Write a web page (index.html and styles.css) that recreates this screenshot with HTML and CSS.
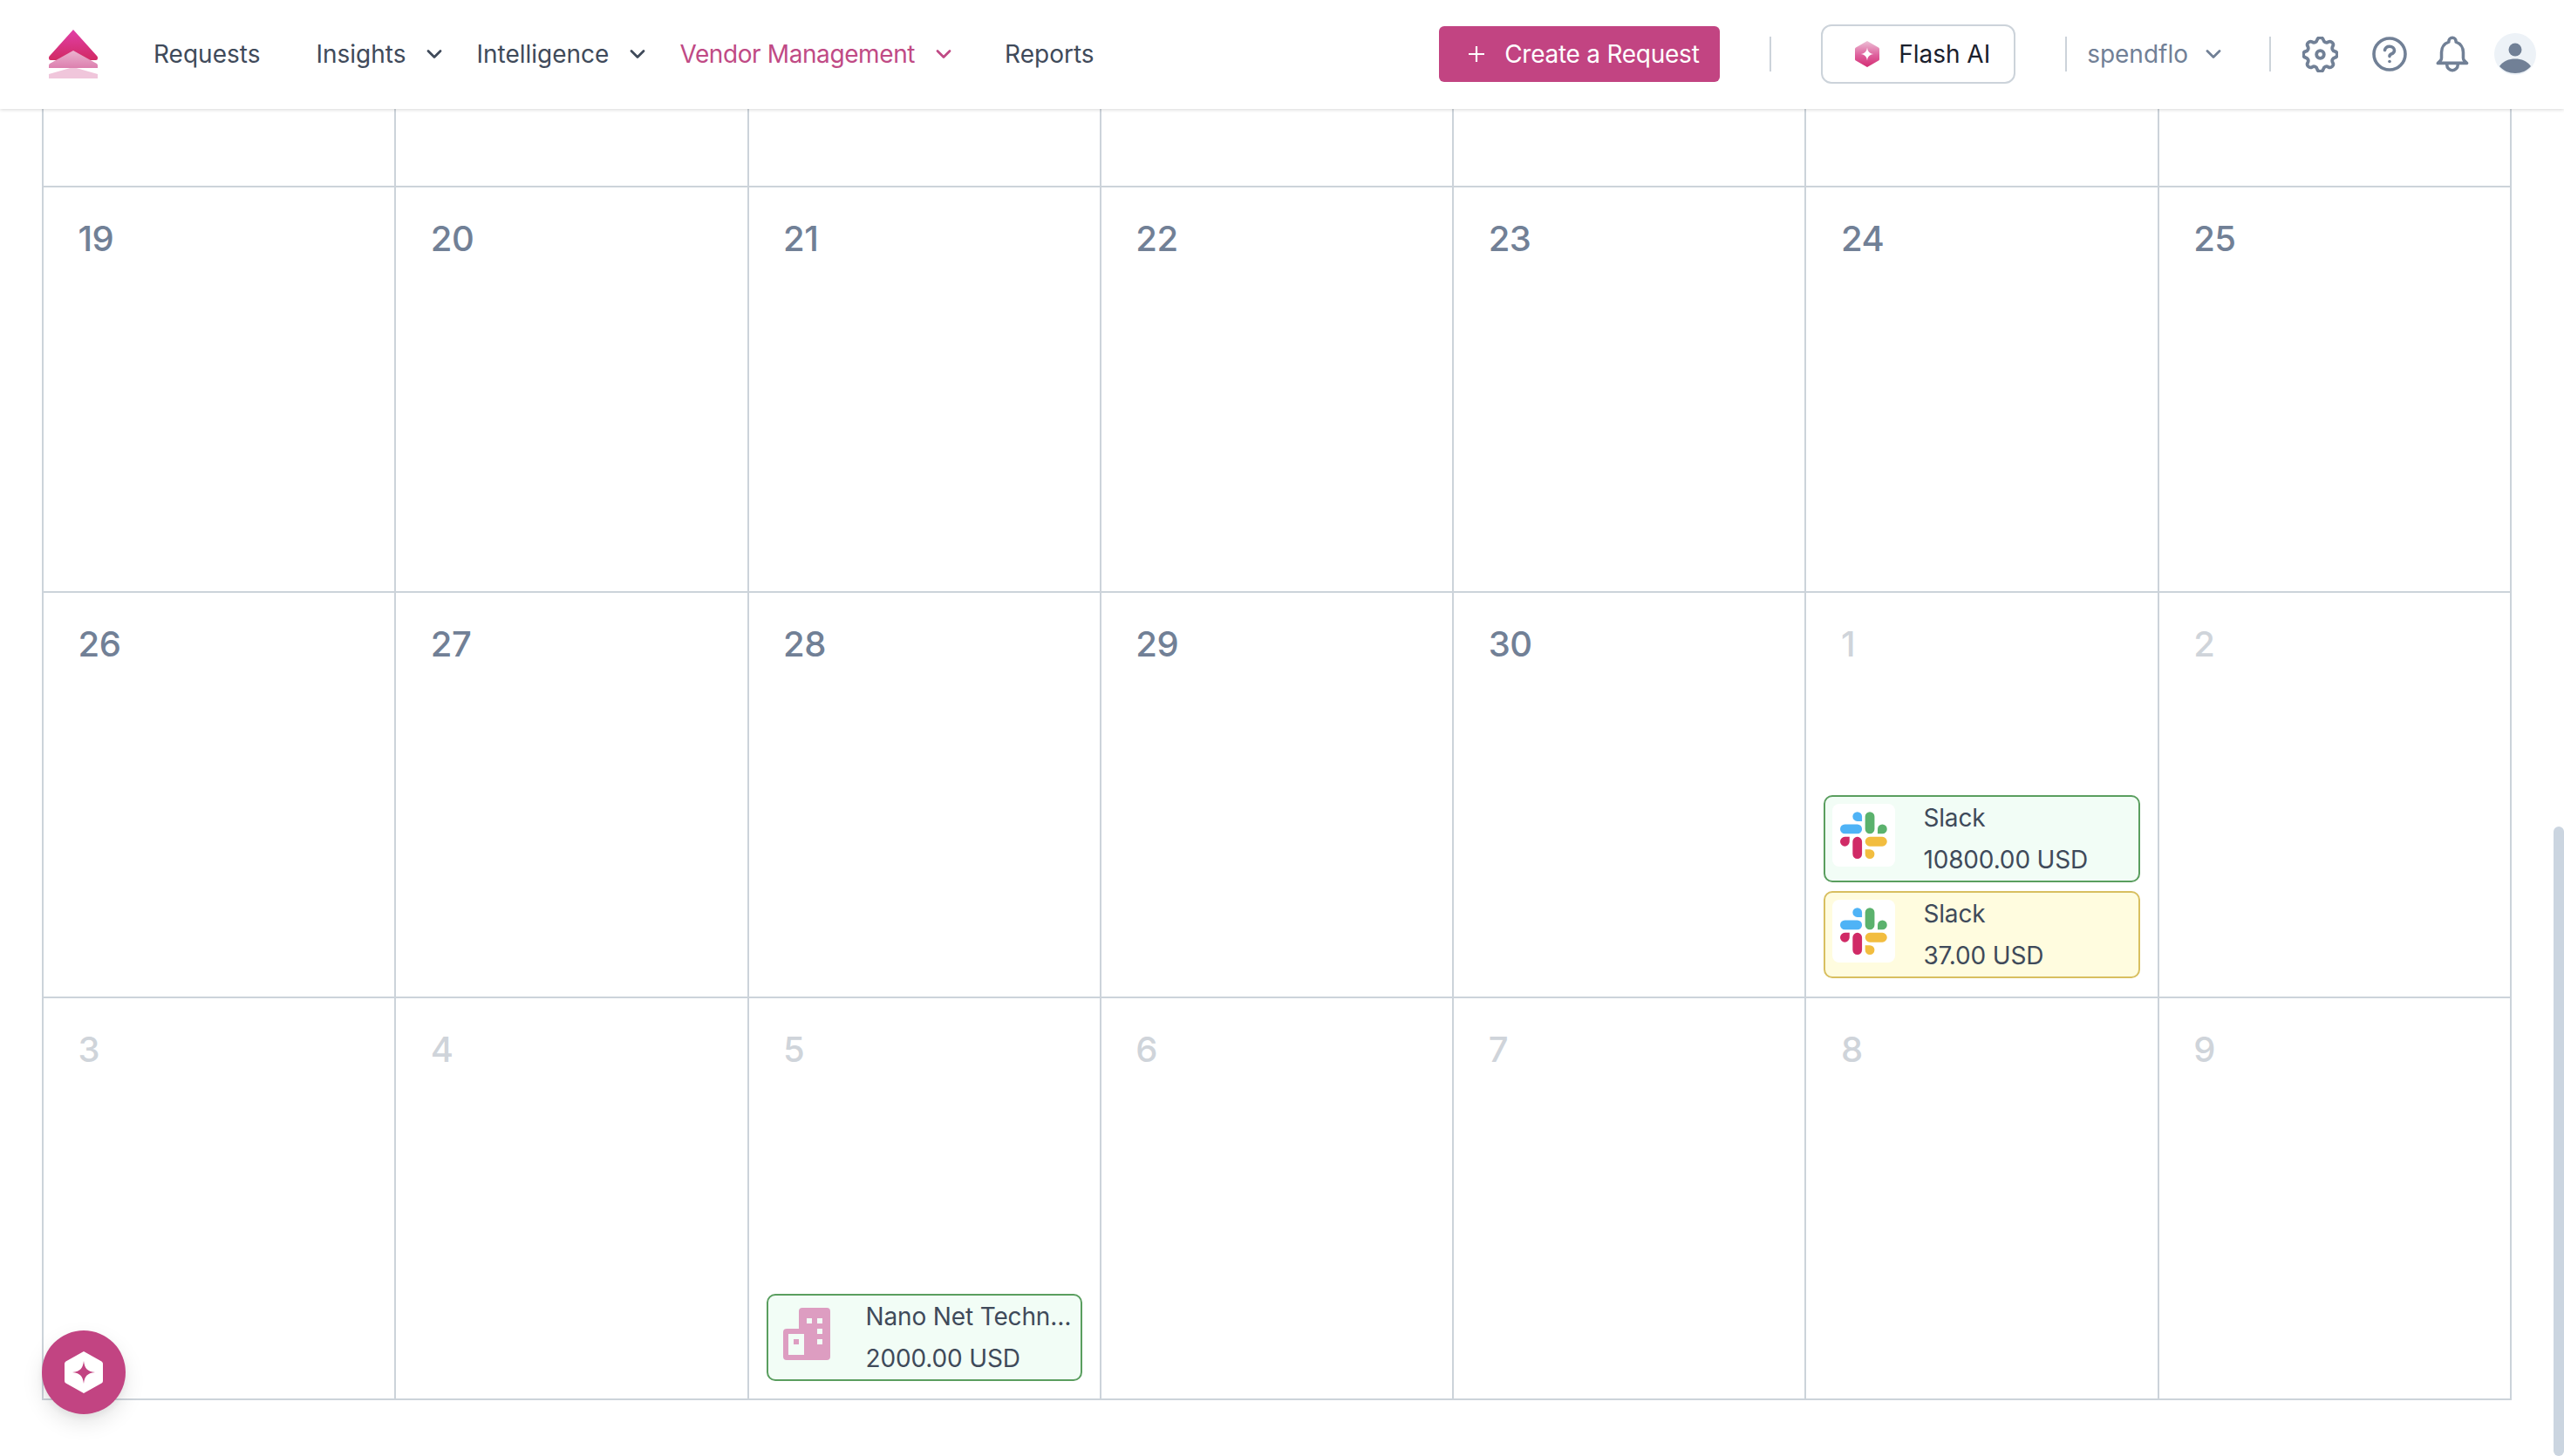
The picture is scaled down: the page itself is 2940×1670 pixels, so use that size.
FILE: index.html
```html
<!DOCTYPE html>
<html>
<head>
  <meta charset="utf-8">
  <title>Vendor Management</title>
  <link rel="stylesheet" href="styles.css">
</head>
<body>
  <!-- shared icons -->
  <svg class="defs" width="0" height="0">
    <defs>
      <linearGradient id="logoTop" x1="0" y1="0" x2="0" y2="1">
        <stop offset="0" stop-color="#e13fa8"/>
        <stop offset="1" stop-color="#d12a63"/>
      </linearGradient>
      <linearGradient id="logoMid" x1="0" y1="0" x2="0" y2="1">
        <stop offset="0" stop-color="#ebb4d0"/>
        <stop offset="1" stop-color="#dc7fae"/>
      </linearGradient>
      <linearGradient id="flashHex" x1="0" y1="0" x2="0" y2="1">
        <stop offset="0" stop-color="#ecc0d6"/>
        <stop offset="0.55" stop-color="#de5f9c"/>
        <stop offset="1" stop-color="#d42d73"/>
      </linearGradient>
      <symbol id="chevron" viewBox="0 0 18 12">
        <path d="M2 2.500l7 7 7-7" fill="none" stroke="currentColor" stroke-width="2.800" stroke-linecap="round" stroke-linejoin="round"/>
      </symbol>
      <symbol id="slack" viewBox="0 0 54 54">
        <path fill="#4fb3f6" d="M19.712.133a5.381 5.381 0 0 0-5.376 5.387 5.381 5.381 0 0 0 5.376 5.386h5.376V5.520A5.381 5.381 0 0 0 19.712.133m0 14.365H5.376A5.381 5.381 0 0 0 0 19.884a5.381 5.381 0 0 0 5.376 5.387h14.336a5.381 5.381 0 0 0 5.376-5.387 5.381 5.381 0 0 0-5.376-5.386"/>
        <path fill="#5bb26d" d="M53.760 19.884a5.381 5.381 0 0 0-5.376-5.386 5.381 5.381 0 0 0-5.376 5.386v5.387h5.376a5.381 5.381 0 0 0 5.376-5.387m-14.336 0V5.520A5.381 5.381 0 0 0 34.048.133a5.381 5.381 0 0 0-5.376 5.387v14.364a5.381 5.381 0 0 0 5.376 5.387 5.381 5.381 0 0 0 5.376-5.387"/>
        <path fill="#f2bd3f" d="M34.048 54a5.381 5.381 0 0 0 5.376-5.387 5.381 5.381 0 0 0-5.376-5.386h-5.376v5.386A5.381 5.381 0 0 0 34.048 54m0-14.365h14.336a5.381 5.381 0 0 0 5.376-5.386 5.381 5.381 0 0 0-5.376-5.387H34.048a5.381 5.381 0 0 0-5.376 5.387 5.381 5.381 0 0 0 5.376 5.386"/>
        <path fill="#d02a66" d="M0 34.249a5.381 5.381 0 0 0 5.376 5.386 5.381 5.381 0 0 0 5.376-5.386v-5.387H5.376A5.381 5.381 0 0 0 0 34.250m14.336-.001v14.364A5.381 5.381 0 0 0 19.712 54a5.381 5.381 0 0 0 5.376-5.387V34.250a5.381 5.381 0 0 0-5.376-5.387 5.381 5.381 0 0 0-5.376 5.387"/>
      </symbol>
    </defs>
  </svg>

  <header class="topbar">
    <svg class="logo" width="56" height="56" viewBox="0 0 56 56">
      <path fill="#f0c6db" d="M28 43L56 51V56H0V51Z"/>
      <path fill="url(#logoTop)" d="M28 0L55 30Q56 31 56 32V33Q56 35 54 35H2Q0 35 0 33V32Q0 31 1 30Z"/>
      <path fill="url(#logoMid)" d="M28 24L55 39Q56 40 56 41V44H0V41Q0 40 1 39Z"/>
    </svg>

    <nav class="nav">
      <a class="nav-item nav-wide">Requests</a>
      <a class="nav-item">Insights <svg class="chev" width="18" height="12"><use href="#chevron"/></svg></a>
      <a class="nav-item">Intelligence <svg class="chev" width="18" height="12"><use href="#chevron"/></svg></a>
      <a class="nav-item nav-active">Vendor Management <svg class="chev" width="18" height="12"><use href="#chevron"/></svg></a>
      <a class="nav-item">Reports</a>
    </nav>

    <div class="actions">
      <button class="btn-create">
        <svg width="20" height="20" viewBox="0 0 20 20"><path d="M10 1v18M1 10h18" stroke="#fff" stroke-width="2.200" fill="none"/></svg>
        Create a Request
      </button>
      <span class="divider"></span>
      <button class="btn-flash">
        <svg width="28" height="30" viewBox="0 0 28 30">
          <path fill="url(#flashHex)" d="M14 0L27 7.500Q28 8 28 9V21Q28 22 27 22.500L14 30L1 22.500Q0 22 0 21V9Q0 8 1 7.500Z"/>
          <path fill="#fff" d="M14 7.500C14.800 12.500 16.500 14.200 21.500 15C16.500 15.800 14.800 17.500 14 22.500C13.200 17.500 11.500 15.800 6.500 15C11.500 14.200 13.200 12.500 14 7.500Z"/>
        </svg>
        Flash AI
      </button>
      <span class="divider divider-org"></span>
      <div class="org">spendflo <svg class="chev" width="18" height="12"><use href="#chevron"/></svg></div>
      <span class="divider divider-icons"></span>
      <svg class="icon" width="41" height="41" viewBox="2.500 2.500 19 19" fill="none" stroke="#718096" stroke-width="1.750" stroke-linecap="round" stroke-linejoin="round">
        <path d="M10.325 4.317c.426-1.756 2.924-1.756 3.350 0a1.724 1.724 0 002.573 1.066c1.543-.94 3.310.826 2.370 2.370a1.724 1.724 0 001.065 2.572c1.756.426 1.756 2.924 0 3.350a1.724 1.724 0 00-1.066 2.573c.94 1.543-.826 3.310-2.370 2.370a1.724 1.724 0 00-2.572 1.065c-.426 1.756-2.924 1.756-3.350 0a1.724 1.724 0 00-2.573-1.066c-1.543.94-3.310-.826-2.370-2.370a1.724 1.724 0 00-1.065-2.572c-1.756-.426-1.756-2.924 0-3.350a1.724 1.724 0 001.066-2.573c-.94-1.543.826-3.310 2.370-2.370.996.608 2.296.07 2.572-1.065z"/>
        <circle cx="12" cy="12" r="2"/>
      </svg>
      <svg class="icon icon-help" width="40" height="40" viewBox="0 0 40 40" fill="none" stroke="#718096" stroke-width="3.600" stroke-linecap="round" stroke-linejoin="round">
        <circle cx="20" cy="20" r="18"/>
        <path d="M14.500 15.500c.6-2.600 2.800-4.200 5.500-4.200 3.100 0 5.500 1.900 5.500 4.400 0 2.200-1.700 3.600-3.600 4.300-1.300.5-1.900 1.300-1.900 2.600"/>
        <path d="M20 28.500h.02"/>
      </svg>
      <svg class="icon icon-bell" width="50" height="54" viewBox="0 0 24 26" fill="none" stroke="#718096" stroke-width="1.700" stroke-linecap="round" stroke-linejoin="round">
        <path d="M15 18h5l-1.405-1.405A2.032 2.032 0 0118 15.158V12a6.002 6.002 0 00-4-5.659V6a2 2 0 10-4 0v.341C7.670 7.165 6 9.388 6 12v3.159c0 .538-.214 1.055-.595 1.436L4 18h5m6 0v1a3 3 0 11-6 0v-1m6 0H9"/>
      </svg>
      <svg class="avatar" width="48" height="48" viewBox="0 0 48 48">
        <circle cx="24" cy="24" r="24" fill="#edf2f7"/>
        <circle cx="24" cy="19" r="7.500" fill="#718096"/>
        <path fill="#718096" d="M6 38C10 32 17 29.500 24 29.500S38 32 42 38C38 43 31 46 24 46S10 43 6 38Z"/>
      </svg>
    </div>
  </header>

  <main class="calendar">
    <div class="cell"></div>
    <div class="cell"></div>
    <div class="cell"></div>
    <div class="cell"></div>
    <div class="cell"></div>
    <div class="cell"></div>
    <div class="cell"></div>

    <div class="cell"><span class="day">19</span></div>
    <div class="cell"><span class="day">20</span></div>
    <div class="cell"><span class="day">21</span></div>
    <div class="cell"><span class="day">22</span></div>
    <div class="cell"><span class="day">23</span></div>
    <div class="cell"><span class="day">24</span></div>
    <div class="cell"><span class="day">25</span></div>

    <div class="cell"><span class="day">26</span></div>
    <div class="cell"><span class="day">27</span></div>
    <div class="cell"><span class="day">28</span></div>
    <div class="cell"><span class="day">29</span></div>
    <div class="cell"><span class="day">30</span></div>
    <div class="cell">
      <span class="day muted">1</span>
      <div class="events">
        <div class="event event-green">
          <span class="event-logo"><svg width="54" height="54"><use href="#slack"/></svg></span>
          <div class="event-text"><span>Slack</span><span>10800.00 USD</span></div>
        </div>
        <div class="event event-yellow">
          <span class="event-logo"><svg width="54" height="54"><use href="#slack"/></svg></span>
          <div class="event-text"><span>Slack</span><span>37.00 USD</span></div>
        </div>
      </div>
    </div>
    <div class="cell"><span class="day muted">2</span></div>

    <div class="cell"><span class="day muted">3</span></div>
    <div class="cell"><span class="day muted">4</span></div>
    <div class="cell">
      <span class="day muted">5</span>
      <div class="events">
        <div class="event event-green">
          <span class="event-logo event-logo-plain">
            <svg width="54" height="60" viewBox="0 0 54 60">
              <path fill="#dd9dc1" fill-rule="evenodd" d="M22 0H50Q54 0 54 4V56Q54 60 50 60H4Q0 60 0 56V28Q0 24 4 24H18V4Q18 0 22 0ZM6 30V54H24V30ZM12 36H18V42H12ZM27 12H33V18H27ZM39 12H45V18H39ZM39 24H45V30H39ZM39 36H45V42H39Z"/>
            </svg>
          </span>
          <div class="event-text"><span>Nano Net Techn…</span><span>2000.00 USD</span></div>
        </div>
      </div>
    </div>
    <div class="cell"><span class="day muted">6</span></div>
    <div class="cell"><span class="day muted">7</span></div>
    <div class="cell"><span class="day muted">8</span></div>
    <div class="cell"><span class="day muted">9</span></div>
  </main>

  <button class="fab">
    <svg width="44" height="48" viewBox="0 0 44 48">
      <path fill="#fff" fill-rule="evenodd" d="M22 0L42.500 11.500Q44 12.500 44 14V34Q44 35.500 42.500 36.500L22 48L1.500 36.500Q0 35.500 0 34V14Q0 12.500 1.500 11.500ZM22 11C23.200 19.500 25.500 22.800 35 24C25.500 25.200 23.200 28.500 22 37C20.800 28.500 18.500 25.200 9 24C18.500 22.800 20.800 19.500 22 11Z"/>
    </svg>
  </button>

  <div class="scroll-thumb"></div>
</body>
</html>
```

FILE: styles.css
```css
* {
  box-sizing: border-box;
}

html, body {
  height: 100%;
}

body {
  margin: 0;
  overflow: hidden;
  background: #fff;
  font-family: 'Inter', sans-serif;
  color: #3f4a5a;
}

.defs {
  position: absolute;
}

button {
  font-family: inherit;
  cursor: pointer;
}

/* top bar */
.topbar {
  position: relative;
  z-index: 2;
  display: flex;
  align-items: center;
  height: 125px;
  padding: 0 32px 1px 56px;
  background: #fff;
  box-shadow: 0 1px 4px rgba(0, 0, 0, 0.16);
}

.logo {
  flex-shrink: 0;
}

.nav {
  display: flex;
  align-items: center;
  margin-left: 64px;
  font-size: 28px;
}

.nav-item {
  display: flex;
  align-items: center;
  gap: 24px;
  margin-right: 39px;
  color: #3f4a5a;
}

.nav-wide {
  margin-right: 64px;
}

.nav-active {
  margin-right: 61px;
  color: #c04a85;
  letter-spacing: -0.4px;
}

.chev {
  flex-shrink: 0;
}

.actions {
  display: flex;
  align-items: center;
  margin-left: auto;
}

.btn-create {
  display: flex;
  align-items: center;
  gap: 22px;
  width: 322px;
  height: 64px;
  padding: 0 0 0 33px;
  border: none;
  border-radius: 6px;
  background: #c24482;
  color: #fff;
  font-size: 28px;
  letter-spacing: -0.25px;
}

.divider {
  width: 2px;
  height: 40px;
  margin: 0 57px;
  background: #ccd3da;
}

.divider-org {
  margin: 0 23px 0 57px;
}

.divider-icons {
  margin: 0 36px 0 55px;
}

.btn-flash {
  display: flex;
  align-items: center;
  gap: 22px;
  width: 223px;
  height: 68px;
  padding: 0 0 0 37px;
  border: 2px solid #ccd3da;
  border-radius: 12px;
  background: #fff;
  color: #1a202c;
  font-size: 28px;
}

.org {
  display: flex;
  align-items: center;
  gap: 20px;
  color: #718096;
  font-size: 28px;
}

.icon {
  flex-shrink: 0;
}

.icon-help {
  margin-left: 39px;
}

.icon-bell {
  margin-left: 27px;
}

.avatar {
  margin-left: 23px;
}

/* calendar */
.calendar {
  display: grid;
  grid-template-columns: repeat(7, 1fr);
  grid-template-rows: 90px 465px 465px 461px;
  margin: 0 60px 0 48px;
  border-left: 2px solid #ccd3da;
}

.cell {
  display: flex;
  flex-direction: column;
  min-width: 0;
  padding: 35px 20px 21px 39.5px;
  border-right: 2px solid #ccd3da;
  border-bottom: 2px solid #ccd3da;
}

.cell:nth-last-child(-n+7) {
  padding-bottom: 20px;
}

.day {
  font-size: 40px;
  line-height: 48px;
  font-weight: 500;
  letter-spacing: -0.5px;
  color: #718096;
}

.day.muted {
  color: #cfd4da;
}

.events {
  display: flex;
  flex-direction: column;
  gap: 10px;
  margin: auto 0 0 -19.5px;
}

.event {
  display: flex;
  align-items: flex-start;
  height: 100px;
  padding: 8px;
  border: 2px solid;
  border-radius: 10px;
  font-size: 28px;
  letter-spacing: -0.15px;
  color: #3f4a5a;
}

.event-green {
  border-color: #5a9e5f;
  background: #f2fdf6;
}

.event-yellow {
  border-color: #d8bf60;
  background: #fffcdf;
}

.event-logo {
  display: flex;
  flex-shrink: 0;
  align-items: center;
  justify-content: center;
  width: 72px;
  height: 72px;
  border-radius: 8px;
  background: #fff;
}

.event-logo-plain {
  background: none;
}

.event-text {
  display: flex;
  flex-direction: column;
  min-width: 0;
  margin: -8px 0 0 32px;
  line-height: 48px;
  white-space: nowrap;
}

/* floating button */
.fab {
  position: fixed;
  left: 48px;
  top: 1526px;
  z-index: 3;
  display: flex;
  align-items: center;
  justify-content: center;
  width: 96px;
  height: 96px;
  padding: 0;
  border: none;
  border-radius: 50%;
  background: #c24482;
  box-shadow: 0 10px 25px rgba(0, 0, 0, 0.1), 0 4px 10px rgba(0, 0, 0, 0.06);
}

/* page scrollbar */
.scroll-thumb {
  position: fixed;
  right: 0;
  top: 948px;
  width: 12px;
  height: 722px;
  border-radius: 6px;
  background: #cbd5e0;
}
```
